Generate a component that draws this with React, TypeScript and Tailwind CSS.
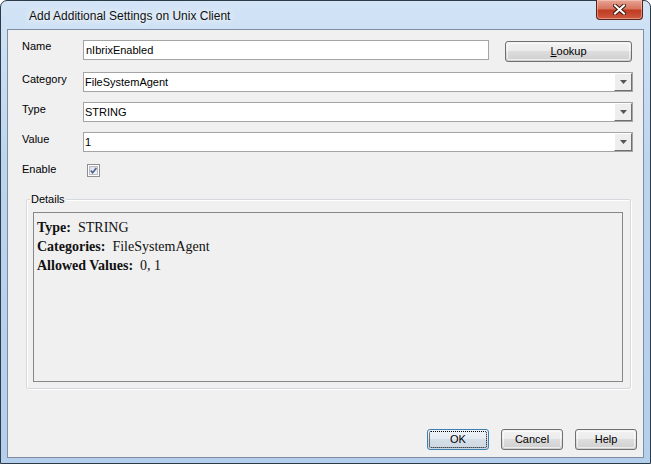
import type { ReactNode } from "react";

function Label({ children }: { children: ReactNode }) {
  return <div className="w-[61px] shrink-0 pt-[1px] text-[11px] leading-[13px] text-black">{children}</div>;
}

function Combo({ value }: { value: string }) {
  return (
    <div className="flex h-[20px] flex-1 border border-[#a4a4a4] bg-white">
      <div className="flex flex-1 items-center pl-[1px] text-[11px] text-black">{value}</div>
      <div className="flex w-[18px] items-center justify-center border border-t-white border-l-white border-r-[#6f6f6f] border-b-[#6f6f6f] bg-[#eeeeee]">
        <svg width="7" height="4" viewBox="0 0 7 4">
          <path d="M0 0h7L3.5 4z" fill="#555" />
        </svg>
      </div>
    </div>
  );
}

function Button({ children, primary, className }: { children: ReactNode; primary?: boolean; className?: string }) {
  return (
    <div
      className={
        "flex h-[21px] items-center justify-center rounded-[3px] border p-[1px] text-[11px] text-black " +
        (primary
          ? "border-[#3c7fb1] bg-[linear-gradient(to_bottom,#eef3f7_0%,#e4ebf1_50%,#d5dfe8_50%,#ccd7e1_100%)] "
          : "border-[#707070] bg-[linear-gradient(to_bottom,#f2f2f2_0%,#ebebeb_50%,#dddddd_50%,#cfcfcf_100%)] ") +
        (className ?? "")
      }
    >
      <div
        className={
          "flex h-full w-full items-center justify-center rounded-[2px] " +
          (primary ? "border border-dotted border-black" : "border border-white/60")
        }
      >
        {children}
      </div>
    </div>
  );
}

export default function App() {
  return (
    <div className="flex h-[464px] w-[651px] flex-col rounded-t-[7px] border border-[#2d3a48] bg-[linear-gradient(to_bottom,#d2e4f6_0%,#bcd5ef_35%,#b4cfec_100%)] font-['Liberation_Sans',Arial,sans-serif]">
      {/* Title bar */}
      <div className="flex h-[28px] shrink-0 items-start pl-[28px]">
        <span className="mt-[8px] text-[12px] leading-[14px] text-[#111] [text-shadow:0_0_6px_#fff,0_0_10px_#fff]">
          Add Additional Settings on Unix Client
        </span>
        <div className="ml-auto mr-[7px] -mt-[1px] flex h-[20px] w-[47px] items-center justify-center rounded-b-[4px] border border-t-0 border-[#5a2219] bg-[linear-gradient(to_bottom,#e8a596_0%,#d8755f_45%,#c13b22_55%,#cf5a40_100%)] shadow-[inset_0_0_0_1px_rgba(255,220,210,0.45)]">
          <svg width="13" height="11" viewBox="0 0 13 11">
            <path d="M2 1.5l9 8M11 1.5l-9 8" stroke="#3b1a14" strokeWidth="4" strokeLinecap="square" />
            <path d="M2 1.5l9 8M11 1.5l-9 8" stroke="#fff" strokeWidth="2" strokeLinecap="square" />
          </svg>
        </div>
      </div>

      {/* Client area */}
      <div className="mx-[6px] mb-[5px] flex h-[429px] flex-col border border-[#7d8ea2] bg-[#f0f0f0] pb-[7px] pl-[14px] pr-[10px] pt-[10px]">
        <div className="flex h-[20px] items-start">
          <div className="w-[61px] shrink-0 text-[11px] leading-[13px] text-black">Name</div>
          <div className="flex h-[20px] w-[406px] items-center border border-[#a4a4a4] bg-white pl-[2px] text-[11px] text-black">
            nIbrixEnabled
          </div>
          <Button className="ml-[16px] mt-[1px] h-[20px] w-[127px]">
            <span>
              <span className="underline underline-offset-[1px]">L</span>ookup
            </span>
          </Button>
        </div>

        <div className="mt-[12px] flex items-start">
          <Label>Category</Label>
          <Combo value="FileSystemAgent" />
        </div>

        <div className="mt-[10px] flex items-start">
          <Label>Type</Label>
          <Combo value="STRING" />
        </div>

        <div className="mt-[10px] flex items-start">
          <Label>Value</Label>
          <Combo value="1" />
        </div>

        <div className="mt-[10px] flex items-start">
          <div className="w-[61px] shrink-0 pt-[1px] text-[11px] leading-[13px] text-black">Enable</div>
          <div className="ml-[4px] mt-[2px] flex h-[13px] w-[13px] items-center justify-center border border-[#8f8f8f] bg-white p-[1px]">
            <div className="flex h-full w-full items-center justify-center border border-[#b8bcc2] bg-[linear-gradient(to_bottom,#dcdfe3,#f5f5f5)]">
              <svg width="8" height="7" viewBox="0 0 8 7">
                <path d="M0.8 3.4l2.2 2.6L7.3 0.6" fill="none" stroke="#4a5f94" strokeWidth="1.8" />
              </svg>
            </div>
          </div>
        </div>

        {/* Details group */}
        <div className="relative ml-[4px] mr-[2px] mt-[22px] flex h-[190px] flex-col rounded-[2px] border border-[#d5d9de] pb-[6px] pl-[6px] pr-[7px] pt-[12px] shadow-[inset_1px_1px_0_#fff,1px_1px_0_#fff]">
          <span className="absolute -top-[7px] left-[3px] bg-[#f0f0f0] px-[1px] text-[11px] leading-[13px] text-black">
            Details
          </span>
          <div className="flex-1 border border-[#878787] bg-[#f0f0f0] pl-[3px] pt-[5px] font-['Liberation_Serif','Times_New_Roman',serif] text-[14px] leading-[19px] text-[#111]">
            <div>
              <b>Type:</b>
              {"\u00a0\u00a0"}STRING
            </div>
            <div>
              <b>Categories:</b>
              {"\u00a0\u00a0"}FileSystemAgent
            </div>
            <div>
              <b>Allowed Values:</b>
              {"\u00a0\u00a0"}0, 1
            </div>
          </div>
        </div>

        {/* Dialog buttons */}
        <div className="-mr-[4px] mt-auto flex justify-end gap-[12px]">
          <Button primary className="w-[62px]">OK</Button>
          <Button className="w-[62px]">Cancel</Button>
          <Button className="w-[62px]">Help</Button>
        </div>
      </div>
    </div>
  );
}
